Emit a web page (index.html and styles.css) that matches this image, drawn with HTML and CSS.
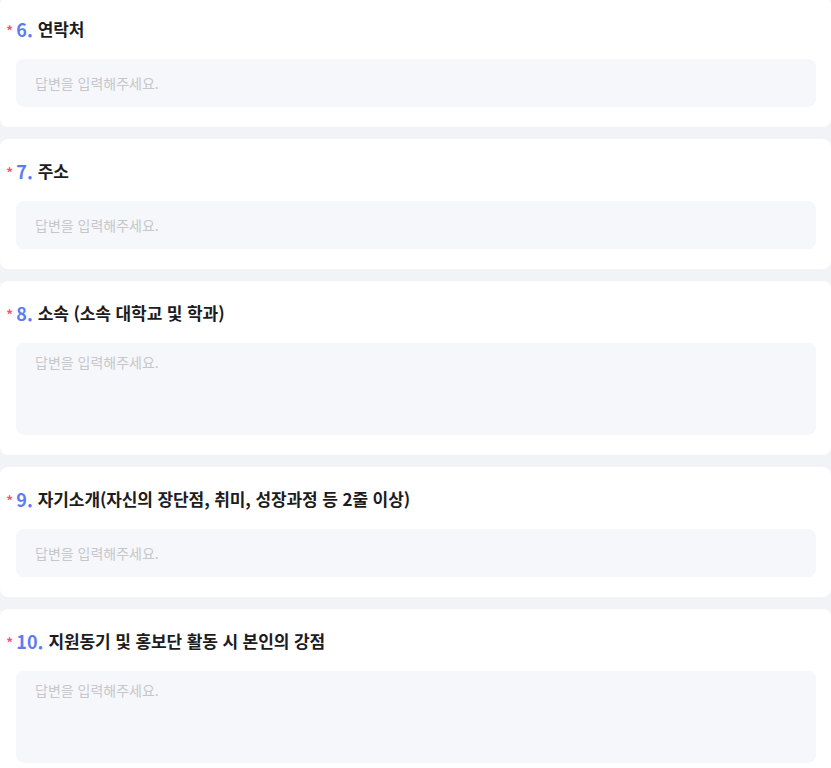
FILE: index.html
```html
<!DOCTYPE html>
<html lang="ko">
<head>
<meta charset="utf-8">
<link rel="stylesheet" href="styles.css">
</head>
<body>
<div class="list">
  <section class="card">
    <h3 class="q"><span class="req">*</span><span class="num">6.</span><span class="label">연락처</span></h3>
    <div class="field">답변을 입력해주세요.</div>
  </section>
  <section class="card">
    <h3 class="q"><span class="req">*</span><span class="num">7.</span><span class="label">주소</span></h3>
    <div class="field">답변을 입력해주세요.</div>
  </section>
  <section class="card">
    <h3 class="q"><span class="req">*</span><span class="num">8.</span><span class="label">소속 (소속 대학교 및 학과)</span></h3>
    <div class="field area">답변을 입력해주세요.</div>
  </section>
  <section class="card">
    <h3 class="q"><span class="req">*</span><span class="num">9.</span><span class="label">자기소개(자신의 장단점, 취미, 성장과정 등 2줄 이상)</span></h3>
    <div class="field">답변을 입력해주세요.</div>
  </section>
  <section class="card">
    <h3 class="q"><span class="req">*</span><span class="num">10.</span><span class="label">지원동기 및 홍보단 활동 시 본인의 강점</span></h3>
    <div class="field area">답변을 입력해주세요.</div>
  </section>
</div>
</body>
</html>
```
FILE: styles.css
```css
html, body {
  margin: 0;
  padding: 0;
  background: #f2f3f6;
  font-family: "Noto Sans CJK KR", "Noto Sans", sans-serif;
}
.list {
  display: flex;
  flex-direction: column;
  gap: 12px;
  margin-top: -3px;
}
.card {
  background: #ffffff;
  border-radius: 8px;
  padding: 20px 15px 20px 16px;
}
.q {
  margin: 0 0 18px -10px;
  height: 24px;
  display: flex;
  align-items: center;
  font-size: 17px;
  font-weight: 700;
  color: #1c1c1e;
  line-height: 24px;
}
.req {
  color: #ff4d68;
  font-size: 15px;
  font-weight: 500;
  margin-right: 3px;
  position: relative;
  top: 2px;
}
.num {
  color: #5d7cf2;
  font-size: 18px;
  font-weight: 700;
  margin-right: 5px;
}
.label {
  letter-spacing: -0.1px;
}
.field {
  height: 48px;
  box-sizing: border-box;
  background: #f6f7fb;
  border-radius: 8px;
  padding: 0 19px;
  display: flex;
  align-items: center;
  font-size: 14px;
  color: #c6c7ca;
}
.field.area {
  height: 92px;
  align-items: flex-start;
  padding-top: 9px;
}
```
